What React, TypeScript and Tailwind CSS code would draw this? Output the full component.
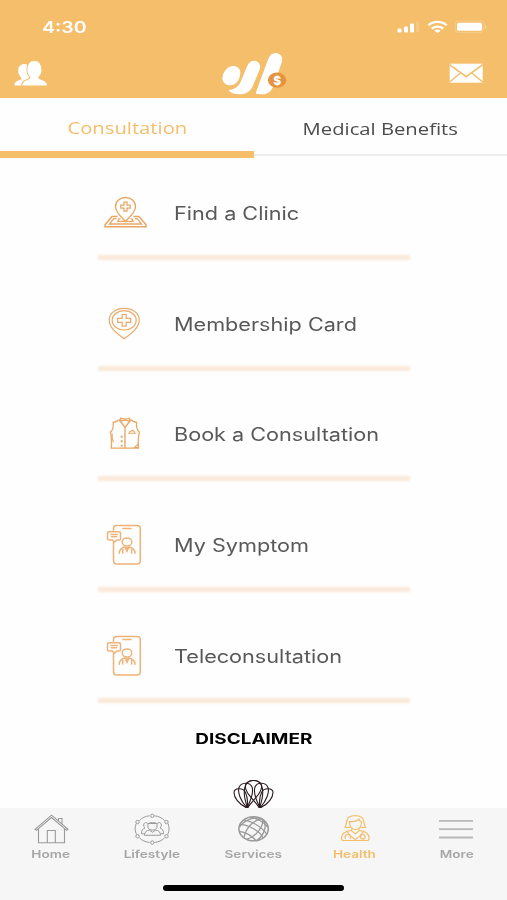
import type { ReactNode } from 'react'
import clsx from 'clsx'

function PeopleIcon() {
  return (
    <svg width="34" height="26" viewBox="0 0 34 26" fill="white">
      <path d="M.5 25.500c0-3 1-4 4-5 2-.8 3-1.300 3-2.600C5.300 16 4.200 13.500 4.200 10.500 4.200 6.500 7 4 10.500 4c1 0 1.900.3 2.700.8-.6 1.600-.8 3.400-.7 5.400.1 2.900 1 5 2.500 6.700 0 1.500-1.400 1.900-3.200 2.600-3.200 1.300-4.300 2.700-4.500 6z" />
      <path d="M8.300 25.500c0-2.900 1.400-4.300 5-5.600 2.200-.8 3.200-1.300 3.200-2.900-1.900-1.400-3.100-3.800-3.100-7C13.400 4.300 16 1 20.400 1s7 3.300 7 9c0 3.200-1.200 5.600-3.100 7 0 1.600 1 2.100 3.200 2.900 4 1.500 5.500 2.600 5.500 5.600z" />
    </svg>
  )
}

function BrandLogo() {
  return (
    <svg width="68" height="44" viewBox="0 -1.5 68 44">
      <g fill="white">
        <path d="M10.500 14c4-1.500 9.500.5 9.800 5.500.2 5-2.300 10.500-6.300 12.500C9.500 34 3.500 32 2.500 27 2 22 5.500 15.500 10.500 14z" />
        <path d="M8.500 37.500C16 37 19.500 33 22 26l5-12c2-5 6-6.500 9.500-5.200 3.500 1.500 4.500 4.700 3 8.700L33 33c-3 7-7.500 8.800-13.500 8.800-5 0-9-1.300-11-4.300z" />
        <path d="M36.500 41.500c-.7-.7-.5-2.300.5-4.500L48 7c2-5.500 6-7.500 10-6s5 5 3.500 9.500L54 32c-2.500 7-6 9.800-12 9.800z" />
      </g>
      <ellipse cx="57.100" cy="27.700" rx="9.200" ry="7.600" fill="#e6933f" />
      <text x="57.100" y="32" textAnchor="middle" fill="white" className="font-['Inter'] text-[12px] font-extrabold">$</text>
    </svg>
  )
}

function MailIcon() {
  return (
    <svg width="34" height="20" viewBox="0 0 34 20">
      <rect width="33" height="19" x=".7" y=".7" fill="white" />
      <path d="M.7 1.700l16.500 12 16.500-12M.7 19l11.500-9.500M33.700 19l-11.500-9.500" fill="none" stroke="#f4be6b" strokeWidth="1.500" />
    </svg>
  )
}

function StatusIcons() {
  return (
    <svg width="94" height="14" viewBox="0 0 94 14" fill="white">
      <rect x="1.500" y="8.500" width="4" height="4" rx="1" />
      <rect x="8" y="6.500" width="4" height="6" rx="1" />
      <rect x="14" y="3.500" width="4" height="9" rx="1" />
      <rect x="20" y="1" width="3.500" height="11.500" rx="1" opacity=".15" />
      <g fill="none" stroke="white" strokeWidth="2.200">
        <path d="M32.300 5.300c5.200-4.600 13.200-4.600 18.400 0" />
        <path d="M35.700 8.600c3.300-2.700 8.300-2.700 11.600 0" />
      </g>
      <path d="M38.300 10.700c1.800-1.500 4.600-1.500 6.400 0l-3.200 2.400z" />
      <rect x="59.200" y="1" width="28.500" height="11.500" rx="3" fill="none" stroke="white" strokeWidth="1" opacity=".2" />
      <rect x="61" y="2.800" width="25" height="8" rx="1.500" />
      <path d="M89 4.800c1.800.5 1.800 3.500 0 4z" opacity=".4" />
    </svg>
  )
}

function ClinicIcon() {
  return (
    <svg width="44" height="34" viewBox="0 0 44 34" fill="none" stroke="#e8a663" strokeWidth="1.300">
      <path d="M21.500 25.500c-3-4-10-8.500-10-14.800 0-5.500 4.500-9.200 10-9.200s10 3.700 10 9.200c0 6.300-7 10.800-10 14.800z" />
      <path d="M20 6.200h3v3h3.200v3H23v3h-3v-3h-3.200v-3H20z" />
      <path d="M13.500 20.500H8L1 28.700v2h41v-2l-7-8.200h-5.500" strokeWidth="1.500" />
      <path d="M12.500 22.700H9.800L5.500 28h32l-4.300-5.300H31" />
      <path d="M16.500 22.800H15l-1.200 2.500h15.400L28 22.800h-1.500" />
    </svg>
  )
}

function MembershipIcon() {
  return (
    <svg width="44" height="34" viewBox="0 0 44 34" fill="none" stroke="#eaa969" strokeWidth="1.200">
      <path d="M20.200 31.800C14.500 27.500 5.200 21.500 5.200 13 5.200 6.200 11.500 1.300 20.200 1.300s15 4.900 15 11.700c0 8.500-9.300 14.500-15 18.800z" />
      <ellipse cx="20.200" cy="13.300" rx="12" ry="9.700" />
      <path d="M18.200 7.500h4v3.800h4.500v4h-4.500v3.800h-4v-3.800h-4.500v-4h4.500z" />
    </svg>
  )
}

function VestIcon() {
  return (
    <svg width="44" height="34" viewBox="0 0 44 34" fill="none" stroke="#e9a867" strokeWidth="1.300">
      <path d="M14.500 2.500c-.5 2-2.500 2.300-5.300 2.800.6 5-.7 8-2.700 10 1.200 5 1.300 10 .8 15.900h27.200c-.5-5.900-.4-10.900.8-15.900-2-2-3.300-5-2.700-10-2.800-.5-4.800-.8-5.300-2.800" />
      <path d="M15 2.500l6 8 6-8M21 10.500v20.700" strokeWidth="1.400" />
      <path d="M16.500 1.200l4.500 1 4.500-1v3l-4.500-1-4.500 1z" />
      <path d="M24 16.200h8.500M25 15.200l3.500-2 2.500 2M8.200 16.500v5l1.300 3.500M30.500 30.500l4-3.500v3.500z" strokeWidth="1.100" />
      <path d="M17.700 18.800v2M17.700 23.300v2M17.700 27.700v2" strokeWidth="2" />
    </svg>
  )
}

function PhoneDoctorIcon() {
  return (
    <svg width="44" height="42" viewBox="0 0 44 42" fill="none" stroke="#edb378" strokeWidth="1.500" strokeLinecap="round">
      <path d="M9.500 6.500V4.500c0-2 1.300-3 3.300-3h20c2.200 0 3.500 1 3.500 3V37c0 2-1.300 3-3.500 3h-20c-2 0-3.300-1-3.300-3V18.500" />
      <path d="M19 4.500h8" strokeWidth="1.600" />
      <path d="M5 7.800h10c1 0 1.500.5 1.500 1.300v5.700c0 .8-.5 1.300-1.500 1.300h-2l-2.500 2-2-2H5c-1 0-1.500-.5-1.500-1.300V9.100c0-.8.5-1.300 1.500-1.300zM7 10.500h6.200M7.500 12.800h5" />
      <ellipse cx="23" cy="18" rx="4.800" ry="4" />
      <path d="M15.300 29.300c0-4.300 2.200-5.600 5.700-6.300 1.300 1 2.700 1 4 0 3.500.7 6 2 6 6.300M18.800 25.500v3.500M27.600 25.500v3.500M21 23.200l2 4 2-4" />
    </svg>
  )
}

function ShellPetals() {
  return (
    <>
      <path d="M14 29C5 25 1 18 1 13.500c0-4.500 9-5.500 11.500 0C14.500 18 15 24 14 29z" />
      <path d="M14 29C7 21 4.500 13 6 8.500 8 3.500 16.500 2.500 19 8 21 13.500 17 23 14 29z" />
      <path d="M14.500 29C11 19 10 11 13 5.500c3-5.500 13-5.500 15.500.5C30 13 20.500 20 14.500 29z" />
    </>
  )
}

function ShellLogo() {
  return (
    <svg width="42" height="32" viewBox="0 0 42 32" fill="none" stroke="#2b1a20" strokeWidth="1.100">
      <ShellPetals />
      <g transform="matrix(-1 0 0 1 41 0)">
        <ShellPetals />
      </g>
      <path d="M14.300 31v-6M26.700 31v-6" strokeWidth="2.200" />
    </svg>
  )
}

function HomeIcon() {
  return (
    <svg width="40" height="32" viewBox="0 0 40 32" fill="none" stroke="#9a9a9a" strokeWidth="1.100">
      <path d="M4 16.300L20.500 2.200l16.500 14.100-1.300 1L20.500 4.500 5.300 17.300zM7.500 15.700v14.100h26V15.700M16.300 29.500V17.500h8v12M27.500 8V5.500h3.500v5.500" />
    </svg>
  )
}

function LifestyleIcon() {
  return (
    <svg width="40" height="32" viewBox="0 0 40 32" fill="none" stroke="#9b9b9b" strokeWidth="1">
      <path d="M22.500 2.800c4 .4 7.500 2 10 4.700M36 10.500c1.500 4 1.400 7.500-.3 11M32.500 25c-2.500 2.600-6 4-10 4.400M17.500 29.400c-4-.4-7.500-2-10-4.400M4.500 21.500c-1.700-3.500-1.800-7-.3-11M7.500 7.500c2.500-2.700 6-4.300 10-4.700" />
      <circle cx="20.300" cy="2.800" r="1.700" />
      <circle cx="34.500" cy="9" r="1.700" />
      <circle cx="34.500" cy="23.300" r="1.700" />
      <circle cx="20.300" cy="29.600" r="1.700" />
      <circle cx="5.500" cy="23.300" r="1.700" />
      <circle cx="5.500" cy="9" r="1.700" />
      <path d="M16 14.500v-3.800c2-1.500 7-1.500 9 0v3.800c-1 3.500-8 3.500-9 0zM15.500 10.500h10" />
      <path d="M12.500 22.300c0-3.200 2-5 5-5.200l3 2.200 3-2.200c3 .2 5 2 5 5.200zM15.500 10.200c-1.800-1.400-3.800-.3-3.800 1.800 0 1.500.5 2.500 1.300 3-2.500.6-3.500 2.300-3.500 5.800h3M25.500 10.200c1.800-1.400 3.800-.3 3.800 1.800 0 1.500-.5 2.500-1.300 3 2.500.6 3.500 2.300 3.500 5.800h-3" />
    </svg>
  )
}

function GlobeIcon() {
  return (
    <svg width="40" height="32" viewBox="0 0 40 32" fill="none" stroke="#9b9b9b" strokeWidth="1.300">
      <ellipse cx="20.600" cy="15.800" rx="14.700" ry="12" strokeWidth="1.600" />
      <g transform="translate(.4 -.2)">
        <path d="M28 6C20 7.500 12.500 14.500 10.500 25M28.500 6c3 5.500-5 18-15.500 20.500M28 6C21 3 10 7.500 6 14.500M29 6.500c5 4.500 3 15-5.500 21" />
        <path d="M11 7.500c5.500 0 17 6 22.500 14M6.500 12c7-1 20.500 6.500 23 13M16 4.500c6 0 14.500 4.500 18.500 10M6 18.500c5.500.5 13 4.500 16.500 9.500" />
      </g>
    </svg>
  )
}

function DoctorIcon() {
  return (
    <svg width="40" height="32" viewBox="0 0 40 32" fill="none" stroke="#f4bd69" strokeWidth="1.200">
      <path d="M15.500 14.500H10c1.800-2.500.8-8 4-10.300 3-2 9.500-2 12.500 0C29.700 6.500 28.700 12 30.500 14.500H25" />
      <path d="M14.500 8.500c4.500.3 7.500-.5 9.500-2.300.2 1.500 1 2.300 2.500 2.800 0 5-2.500 7.500-6.200 7.500s-6-3-5.800-8z" />
      <path d="M16.500 15.800v1.800L20.300 21l3.800-3.400v-1.800M16.500 17.500c-6.500.5-10 2.300-10 7.800 0 1.500.6 2.200 2 2.200h23.600c1.400 0 2-.7 2-2.200 0-5.500-3.500-7.300-10-7.800" />
      <path d="M12 18.500c1.500 2.500 4.500 5.700 8.300 8.200 3.800-2.500 6.500-5.700 8.200-8.200M10.500 26c-1.300-3 0-4.500 2.200-4.500s3.500 1.500 2.200 4.500" />
      <circle cx="27.800" cy="23.800" r="2.300" />
    </svg>
  )
}

function MoreIcon() {
  return (
    <svg width="40" height="32" viewBox="0 0 40 32" stroke="#b8b8b8" strokeWidth="1.800">
      <path d="M3 7.800h34M3 16.100h34M3 24.500h34" />
    </svg>
  )
}

const services = [
  { label: 'Find a Clinic', icon: <ClinicIcon /> },
  { label: 'Membership Card', icon: <MembershipIcon /> },
  { label: 'Book a Consultation', icon: <VestIcon /> },
  { label: 'My Symptom', icon: <PhoneDoctorIcon /> },
  { label: 'Teleconsultation', icon: <PhoneDoctorIcon /> },
]

const navItems = [
  { label: 'Home', icon: <HomeIcon /> },
  { label: 'Lifestyle', icon: <LifestyleIcon /> },
  { label: 'Services', icon: <GlobeIcon /> },
  { label: 'Health', icon: <DoctorIcon />, active: true },
  { label: 'More', icon: <MoreIcon /> },
]

function ServiceRow({ icon, label }: { icon: ReactNode; label: string }) {
  return (
    <li>
      <button className="flex h-[84px] w-full items-center">
        <span className="ml-[6.500px] flex w-[70px] shrink-0">{icon}</span>
        <span className="origin-left scale-x-[1.202] whitespace-nowrap pt-[2px] text-[18px] leading-6 text-[#595959]">{label}</span>
      </button>
      <div className="h-[5px] bg-[#fbe9da] blur-[1px]" />
    </li>
  )
}

export default function App() {
  return (
    <div className="flex h-[900px] w-[507px] flex-col overflow-hidden bg-[#fefefe] font-['Inter',sans-serif]">
      <header className="flex h-[98px] shrink-0 flex-col bg-[#f4be6b]">
        <div className="flex h-[51px] items-center justify-between pl-[42px] pr-[17px] pt-[2px]">
          <span className="origin-left scale-x-[1.22] text-[16px] font-semibold text-white">4:30</span>
          <StatusIcons />
        </div>
        <div className="grid h-[44px] grid-cols-[1fr_68px_1fr] items-center px-[14px]">
          <PeopleIcon />
          <BrandLogo />
          <span className="mr-[10px] justify-self-end"><MailIcon /></span>
        </div>
      </header>

      <nav className="grid h-[60px] shrink-0 grid-cols-2 font-['Open_Sans',sans-serif] text-[17px]">
        <button className="flex items-center justify-center border-b-[7px] border-[#f4be6b] pl-px pt-[7px] text-[#f4be6b]">
          <span className="scale-x-[1.19]">Consultation</span>
        </button>
        <div className="flex flex-col">
          <button className="flex h-[58px] items-center justify-center border-b-2 border-[#ededed] pt-[5px] text-[#4c4c4c]">
            <span className="scale-x-[1.19]">Medical Benefits</span>
          </button>
        </div>
      </nav>

      <main className="min-h-0 flex-1 overflow-hidden pt-[13px]">
        <ul className="mx-auto flex w-[312px] flex-col gap-[21.700px]">
          {services.map((item) => (
            <ServiceRow key={item.label} icon={item.icon} label={item.label} />
          ))}
        </ul>
        <section className="flex flex-col items-center pt-[24px]">
          <h2 className="scale-x-[1.305] text-[14.500px] font-bold leading-6 text-black">DISCLAIMER</h2>
          <div className="ml-px mt-[28px]"><ShellLogo /></div>
        </section>
      </main>

      <footer className="flex h-[92px] shrink-0 flex-col items-center bg-[#f6f6f6]">
        <nav className="grid w-full grid-cols-5 pt-[5px]">
          {navItems.map((item) => (
            <button
              key={item.label}
              className={clsx('flex flex-col items-center', item.active ? 'text-[#f4be6b]' : 'text-[#a6a6a6]')}
            >
              {item.icon}
              <span className="mt-px scale-x-[1.235] text-[11px] font-semibold leading-4">{item.label}</span>
            </button>
          ))}
        </nav>
        <div className="mt-[23px] h-[5.500px] w-[181px] rounded-full bg-black" />
      </footer>
    </div>
  )
}
